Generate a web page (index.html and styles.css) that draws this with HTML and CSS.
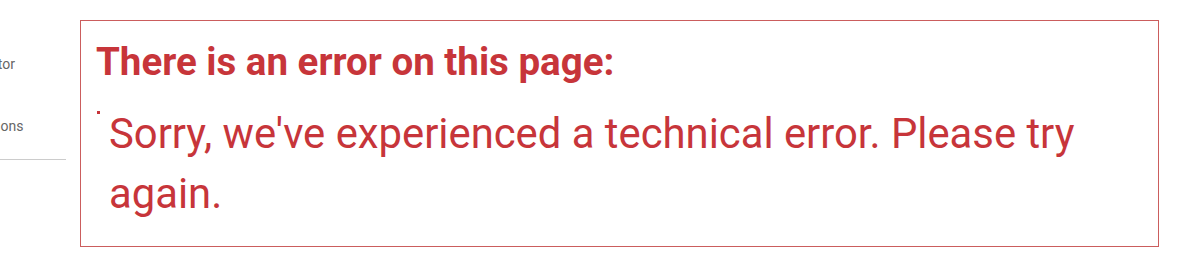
FILE: index.html
```
<!DOCTYPE html>
<html lang="en">
<head>
<meta charset="utf-8">
<title>Error</title>
<link rel="stylesheet" href="styles.css">
</head>
<body>
<div class="page">
  <nav class="sidebar">
    <ul class="side-list">
      <li class="side-item side-item-first">Administrator</li>
      <li class="side-item side-item-second">Subscriptions</li>
    </ul>
  </nav>
  <section class="error-box">
    <h2 class="error-title">There is an error on this page:</h2>
    <ul class="error-list">
      <li class="error-item">Sorry, we've experienced a technical error. Please try again.</li>
    </ul>
  </section>
</div>
</body>
</html>
```
FILE: styles.css
```
html, body {
  margin: 0;
  padding: 0;
  background: #ffffff;
}
body {
  font-family: Roboto, "Liberation Sans", Arial, sans-serif;
  width: 1200px;
  height: 268px;
  overflow: hidden;
}
.page {
  display: flex;
  align-items: flex-start;
}
.sidebar {
  width: 66px;
  flex: none;
  overflow: hidden;
  margin-right: 14px;
}
.side-list {
  list-style: none;
  margin: 0;
  padding: 0;
  border-bottom: 1px solid #cccccc;
  padding-bottom: 23px;
}
.side-item {
  font-size: 14px;
  color: #666666;
  white-space: nowrap;
  line-height: 20px;
}
.side-item-first {
  margin-top: 54px;
  margin-left: -70px;
}
.side-item-second {
  margin-top: 42px;
  margin-left: -62px;
}
.error-box {
  margin-top: 20px;
  width: 1079px;
  height: 227px;
  border: 1px solid #cb5d5d;
  box-sizing: border-box;
  padding: 12px 15px 0 15px;
  color: #c7353a;
}
.error-title {
  margin: 0;
  font-size: 38.5px;
  font-weight: 700;
  line-height: 57px;
}
.error-list {
  list-style: none;
  margin: 14px 0 0 0;
  padding: 0;
}
.error-item {
  position: relative;
  padding-left: 13px;
  font-size: 41.8px;
  line-height: 60px;
  padding-right: 60px;
}
.error-item::before {
  content: "";
  position: absolute;
  left: 1px;
  top: 7px;
  width: 3px;
  height: 3px;
  background: #c7353a;
}
```
